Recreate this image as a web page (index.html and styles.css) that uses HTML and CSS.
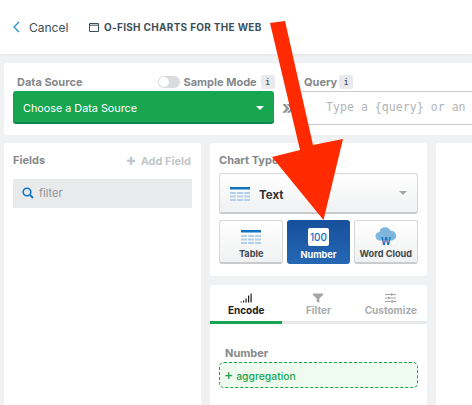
FILE: index.html
```html
<!DOCTYPE html>
<html lang="en">
<head>
  <meta charset="UTF-8">
  <title>Chart Builder</title>
  <link rel="stylesheet" href="styles.css">
</head>
<body>
  <div class="header">
    <svg class="back-icon" width="7" height="12" viewBox="0 0 7 12"><path d="M6 1 1 6l5 5" fill="none" stroke="#1a8fc4" stroke-width="1.2"/></svg>
    <span class="cancel">Cancel</span>
    <svg class="title-icon" width="10" height="9" viewBox="0 0 10 9"><path d="M.5.5h9v8h-9zM.5 2.2h9" fill="none" stroke="#3d4f58" stroke-width="1"/></svg>
    <span class="title">O-FISH CHARTS FOR THE WEB</span>
  </div>

  <div class="source-panel">
    <div class="source-col">
      <div class="label-row">
        <span class="label">Data Source</span>
        <span class="toggle"></span>
        <span class="label">Sample Mode</span>
        <span class="info">i</span>
      </div>
      <div class="source-btn">
        <span>Choose a Data Source</span>
        <span class="caret-white"></span>
      </div>
    </div>
    <div class="chevrons">»</div>
    <div class="query-col">
      <div class="label-row">
        <span class="label">Query</span>
        <span class="info">i</span>
      </div>
      <div class="query-input">Type a {query} or an</div>
    </div>
  </div>

  <div class="main">
    <div class="fields-panel">
      <div class="fields-head">
        <span class="label">Fields</span>
        <span class="add-field"><b>+</b> Add Field</span>
      </div>
      <div class="filter-box">
        <svg width="12" height="12" viewBox="0 0 12 12"><circle cx="5" cy="5" r="3.8" fill="none" stroke="#0f73c4" stroke-width="1.6"/><path d="M8 8l3 3" stroke="#0f73c4" stroke-width="1.8"/></svg>
        <span>filter</span>
      </div>
    </div>

    <div class="middle">
      <div class="chart-panel">
        <div class="label">Chart Type</div>
        <div class="type-select">
          <svg width="20" height="15" viewBox="0 0 20 15"><use href="#table-icon"/></svg>
          <span class="type-name">Text</span>
          <span class="caret-grey"></span>
        </div>
        <div class="type-row">
          <div class="type-card">
            <svg width="20" height="15" viewBox="0 0 20 15"><use href="#table-icon"/></svg>
            <span>Table</span>
          </div>
          <div class="type-card type-active">
            <div class="num-badge">100</div>
            <span>Number</span>
          </div>
          <div class="type-card">
            <svg width="22" height="19" viewBox="0 0 22 19"><path d="M5 14.500a4.200 4.200 0 0 1-.6-8.400A5.800 5.800 0 0 1 15.500 4.800 4.900 4.900 0 0 1 17 14.500z" fill="#7fb6dc"/><text x="11" y="18.500" class="cloud-w">W</text></svg>
            <span>Word Cloud</span>
          </div>
        </div>
      </div>

      <div class="encode-panel">
        <div class="tabs">
          <div class="tab tab-active">
            <svg width="12" height="10" viewBox="0 0 12 10"><path d="M.5 8.500h1.200v1H.5zM3 7.500h1.200v2H3zM5.500 5.500h1.200v4H5.500zM8 2.500h1.200v7H8zM10.500.5h1.200v9h-1.200z" fill="#1c1c1c"/></svg>
            <span>Encode</span>
          </div>
          <div class="tab">
            <svg width="10" height="10" viewBox="0 0 10 10"><path d="M0 .5h10v1.500L6.300 5.500V10L3.700 8.500v-3L0 2z" fill="#a3a6a8"/></svg>
            <span>Filter</span>
          </div>
          <div class="tab">
            <svg width="11" height="10" viewBox="0 0 11 10"><path d="M0 1.500h11M0 5h11M0 8.500h11" stroke="#a3a6a8"/><path d="M6 .3h1.400v2.400H6zM3 3.800h1.400v2.400H3zM6.500 7.300h1.400v2.400H6.500z" fill="#a3a6a8"/></svg>
            <span>Customize</span>
          </div>
        </div>
        <div class="encode-body">
          <div class="label">Number</div>
          <div class="drop-zone"><b>+</b> aggregation</div>
        </div>
      </div>
    </div>

    <div class="right-panel"></div>
  </div>

  <svg class="arrow" width="472" height="405" viewBox="0 0 472 405">
    <path d="M270 23 285 21 313 145 343 139 323.500 220 272 157 300 150z" fill="#ff2a00"/>
  </svg>

  <svg class="defs" width="0" height="0">
    <symbol id="table-icon" viewBox="0 0 20 15">
      <path d="M0 0h20v2.500H0z" fill="#0f73c4"/>
      <path d="M0 5h6v2H0zM7 5h6v2H7zM14 5h6v2h-6zM0 8.500h6v2H0zM7 8.500h6v2H7zM14 8.500h6v2h-6zM0 12h6v2H0zM7 12h6v2H7zM14 12h6v2h-6z" fill="#b3d0ea"/>
    </symbol>
  </svg>
</body>
</html>
```

FILE: styles.css
```css
html, body {
  height: 100%;
}

body {
  margin: 0;
  background: #f0f1f3;
  font-family: "Inter", "Liberation Sans", sans-serif;
  overflow: hidden;
  position: relative;
}

.header {
  height: 54px;
  background: #fff;
  display: flex;
  align-items: center;
  padding-left: 13px;
  box-shadow: 0 1px 3px rgba(0, 0, 0, 0.06);
}

.back-icon {
  margin-right: 9px;
}

.cancel {
  width: 38px;
  font-size: 12px;
  color: #3d4f58;
  margin-right: 22px;
  white-space: nowrap;
}

.title-icon {
  margin-right: 5px;
}

.title {
  font-size: 10px;
  font-weight: 700;
  letter-spacing: 0.3px;
  color: #3d4f58;
}

.source-panel {
  margin: 9px 0 8px 4px;
  height: 72px;
  background: #fff;
  border-radius: 3px 0 0 3px;
  display: flex;
  padding-left: 9px;
  overflow: hidden;
}

.source-col {
  width: 261px;
  flex: none;
}

.label-row {
  display: flex;
  align-items: center;
  height: 18px;
  margin-top: 10px;
  padding-left: 4px;
  white-space: nowrap;
}

.label {
  flex: none;
  font-size: 11px;
  font-weight: 700;
  color: #85898c;
}

.toggle {
  flex: none;
  width: 22px;
  height: 12px;
  border-radius: 6px;
  background: #d9dbdc;
  margin-left: 76px;
  margin-right: 3px;
  position: relative;
}

.toggle::after {
  content: "";
  position: absolute;
  left: 1px;
  top: 1px;
  width: 10px;
  height: 10px;
  border-radius: 50%;
  background: #fff;
}

.info {
  flex: none;
  width: 14px;
  height: 14px;
  margin-left: 4px;
  background: #e9eaeb;
  border-radius: 2px;
  font-family: "DejaVu Sans Mono", monospace;
  font-size: 9px;
  line-height: 14px;
  text-align: center;
  color: #333;
}

.source-btn {
  height: 33px;
  box-sizing: border-box;
  background: #17a550;
  border-bottom: 2px solid #13854a;
  border-radius: 3px;
  color: #fff;
  font-size: 10.800px;
  display: flex;
  align-items: center;
  justify-content: space-between;
  padding: 3px 10px 0;
}

.caret-white {
  border: 4px solid transparent;
  border-top: 4px solid #fff;
  border-bottom: 0;
}

.chevrons {
  width: 28px;
  flex: none;
  margin-top: 29px;
  font-size: 19px;
  font-weight: 700;
  line-height: 32px;
  color: #8f9395;
  text-align: center;
}

.query-col {
  flex: 1;
  min-width: 0;
}

.query-col .label-row {
  padding-left: 2px;
}

.query-col .info {
  margin-left: 2px;
}

.query-input {
  width: 300px;
  height: 32px;
  border-top: 1px solid #c8cacb;
  border-bottom: 1px solid #c8cacb;
  font-family: "DejaVu Sans Mono", monospace;
  font-size: 11.600px;
  line-height: 31px;
  color: #b2b5b6;
  padding-left: 24px;
  white-space: nowrap;
}

.main {
  display: flex;
  align-items: flex-start;
  margin-left: 4px;
  gap: 9px;
}

.fields-panel {
  width: 197px;
  height: 262px;
  background: #fff;
  border-radius: 3px 3px 0 0;
  padding: 9px 9px;
  box-sizing: border-box;
  flex: none;
}

.fields-head {
  display: flex;
  justify-content: space-between;
  align-items: center;
  height: 15px;
  margin-bottom: 12px;
}

.add-field {
  font-size: 11px;
  font-weight: 700;
  color: #c4c6c7;
  padding-right: 1px;
}

.add-field b {
  font-size: 15px;
  line-height: 15px;
  margin-right: 2px;
}

.filter-box {
  height: 29px;
  box-sizing: border-box;
  padding-bottom: 1px;
  background: #e9eaec;
  display: flex;
  align-items: center;
  gap: 5px;
  padding-left: 9px;
  font-size: 11px;
  color: #8f9395;
}

.middle {
  width: 217px;
  flex: none;
  display: flex;
  flex-direction: column;
  gap: 9px;
}

.chart-panel {
  height: 133px;
  background: #fff;
  border-radius: 3px;
  padding: 10px 9px;
  box-sizing: border-box;
}

.type-select {
  height: 41px;
  margin-top: 6px;
  background: linear-gradient(#fff, #f0f1f2);
  border: 1px solid #d5d7d8;
  border-bottom: 2px solid #c9cbcc;
  border-radius: 3px;
  box-sizing: border-box;
  display: flex;
  align-items: center;
  padding: 3px 10px 0;
}

.type-name {
  font-size: 11.500px;
  font-weight: 700;
  color: #333;
  margin-left: 9px;
  flex: 1;
}

.caret-grey {
  border: 4px solid transparent;
  border-top: 4px solid #a3a6a8;
  border-bottom: 0;
  margin-top: -4px;
}

.type-row {
  display: flex;
  gap: 4px;
  margin-top: 6px;
}

.type-card {
  flex: 1;
  height: 44px;
  box-sizing: border-box;
  background: linear-gradient(#fff, #f0f1f2);
  border: 1px solid #d5d7d8;
  border-bottom: 2px solid #c9cbcc;
  border-radius: 3px;
  display: flex;
  flex-direction: column;
  align-items: center;
  justify-content: flex-end;
  gap: 3px;
  padding-bottom: 3px;
  font-size: 9.200px;
  font-weight: 700;
  color: #41484c;
  white-space: nowrap;
}

.type-active {
  background: linear-gradient(#174f9b, #2568b4);
  border: 0;
  color: #fff;
  padding-bottom: 4px;
}

.num-badge {
  width: 21px;
  height: 18px;
  background: #fff;
  border-radius: 2px;
  color: #0f73c4;
  font-size: 10px;
  font-weight: 500;
  line-height: 18px;
  text-align: center;
}

.cloud-w {
  font-family: "Liberation Sans", sans-serif;
  font-size: 10px;
  font-weight: 700;
  text-anchor: middle;
  fill: #0f73c4;
}

.encode-panel {
  height: 120px;
  background: #fff;
  border-radius: 3px 3px 0 0;
}

.tabs {
  display: flex;
  height: 36px;
  border-bottom: 3px solid #e8e9ea;
}

.tab {
  flex: 1;
  height: 36px;
  display: flex;
  flex-direction: column;
  align-items: center;
  justify-content: flex-end;
  gap: 1px;
  padding-bottom: 5px;
  box-sizing: border-box;
  font-size: 10px;
  font-weight: 700;
  color: #a9acae;
}

.tab-active {
  height: 39px;
  border-bottom: 3px solid #17a550;
  color: #1c1c1c;
}

.encode-body {
  padding: 22px 9px 0;
}

.encode-body .label {
  margin-left: 6px;
  margin-bottom: 2px;
}

.drop-zone {
  height: 26px;
  box-sizing: border-box;
  background: #f0fbef;
  border: 1px dashed #17a550;
  border-radius: 5px;
  color: #17a550;
  font-size: 10.400px;
  font-weight: 500;
  line-height: 24px;
  padding-left: 4px;
}

.drop-zone b {
  font-weight: 500;
  font-size: 14px;
}

.right-panel {
  flex: 1;
  height: 262px;
  background: #fff;
  border-radius: 3px 0 0 0;
}

.arrow {
  position: absolute;
  left: 0;
  top: 0;
}

.defs {
  position: absolute;
}
```
